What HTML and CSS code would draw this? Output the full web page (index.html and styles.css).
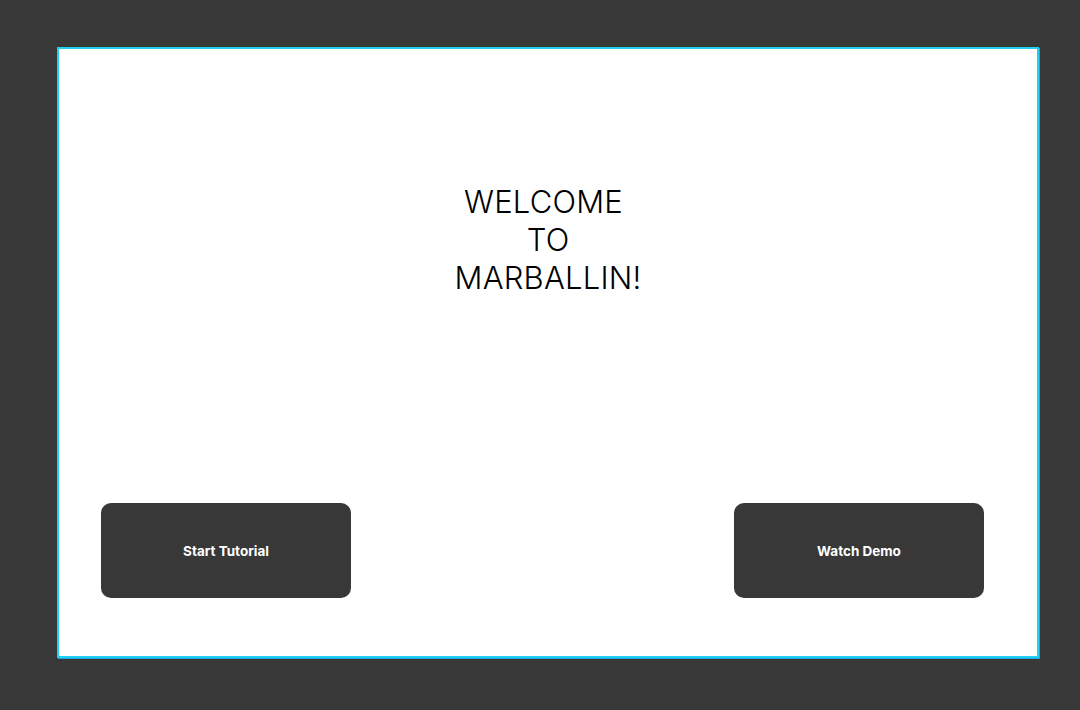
FILE: index.html
```html
<!DOCTYPE html>
<html>
<head>
<meta charset="utf-8">
<link rel="stylesheet" href="styles.css">
</head>
<body>
<div class="frame">
  <h1 class="title"><span class="line line-first">WELCOME</span><span class="line">TO</span><span class="line">MARBALLIN!</span></h1>
  <div class="actions">
    <button class="btn">Start Tutorial</button>
    <button class="btn">Watch Demo</button>
  </div>
</div>
</body>
</html>
```
FILE: styles.css
```css
html, body {
  margin: 0;
  padding: 0;
  background: #383838;
  height: 100%;
}
body {
  padding: 47px 0 0 57px;
  box-sizing: border-box;
  font-family: Inter, "Liberation Sans", sans-serif;
}
.frame {
  width: 982px;
  height: 611px;
  box-sizing: border-box;
  background: #ffffff;
  border: 2px solid #1fd0f2;
  box-shadow: 1px 1px 0 0 #1aa6e6;
  display: flex;
  flex-direction: column;
}
.title {
  margin: 134px 0 0 0;
  font-weight: 300;
  font-size: 31px;
  line-height: 38px;
  text-align: center;
  color: #000;
  letter-spacing: 0.2px;
}
.line {
  display: block;
}
.line-first {
  padding-right: 9px;
}
.actions {
  margin-top: auto;
  margin-bottom: 58px;
  display: flex;
  justify-content: space-between;
  padding: 0 53px 0 42px;
}
.btn {
  width: 250px;
  height: 95px;
  border: none;
  border-radius: 10px;
  background: #383838;
  color: #fff;
  font-family: Inter, "Liberation Sans", sans-serif;
  font-weight: 700;
  font-size: 13.5px;
  letter-spacing: 0;
  padding: 1px 0 0 0;
}
```
